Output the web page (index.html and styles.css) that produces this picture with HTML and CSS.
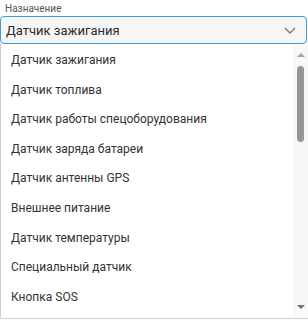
FILE: index.html
```html
<!DOCTYPE html>
<html lang="ru">
<head>
<meta charset="utf-8">
<link rel="stylesheet" href="styles.css">
</head>
<body>
<div class="field">
  <div class="label">Назначение</div>
  <div class="select">
    <span class="value">Датчик зажигания</span>
    <svg class="chev" width="12" height="7" viewBox="0 0 12 7"><path d="M1 1 L6 6 L11 1" fill="none" stroke="#7a7a7a" stroke-width="1.4"/></svg>
  </div>
  <div class="dropdown">
    <ul class="options">
      <li>Датчик зажигания</li>
      <li>Датчик топлива</li>
      <li>Датчик работы спецоборудования</li>
      <li>Датчик заряда батареи</li>
      <li>Датчик антенны GPS</li>
      <li>Внешнее питание</li>
      <li>Датчик температуры</li>
      <li>Специальный датчик</li>
      <li>Кнопка SOS</li>
    </ul>
    <div class="scrollbar">
      <div class="arrow up"></div>
      <div class="thumb"></div>
      <div class="spacer"></div>
      <div class="arrow down"></div>
    </div>
  </div>
</div>
</body>
</html>
```
FILE: styles.css
```css
html, body { margin: 0; padding: 0; background: #fff; }
body { font-family: Roboto, "Noto Sans", sans-serif; color: #333; width: 308px; height: 320px; overflow: hidden; }
.field { display: flex; flex-direction: column; }
.label { font-size: 10px; color: #555; line-height: 12px; padding: 3px 0 1px 5px; height: 12px; }
.select {
  box-sizing: border-box; height: 28px; width: 307px;
  border: 1px solid #3c9be0; border-radius: 4px; background: #f6f6f6;
  display: flex; align-items: center; justify-content: space-between;
  padding: 0 10px 0 5px;
}
.value { font-size: 13px; color: #2b2b2b; }
.chev { display: block; }
.dropdown {
  box-sizing: border-box; height: 275px; width: 308px;
  border-left: 1px solid #cfcfcf; border-bottom: 1px solid #cfcfcf;
  display: flex; overflow: hidden;
}
.options { list-style: none; margin: 0; padding: 2px 0 0 0; flex: 1; }
.options li { font-size: 12px; color: #333; height: 29.6px; line-height: 29.6px; padding-left: 10px; white-space: nowrap; }
.scrollbar { width: 15px; background: #f8f8f8; display: flex; flex-direction: column; align-items: center; }
.arrow { width: 0; height: 0; border-left: 4px solid transparent; border-right: 4px solid transparent; }
.arrow.up { border-bottom: 4px solid #a3a3a3; margin-top: 9px; }
.arrow.down { border-top: 4px solid #6f6f6f; margin-bottom: 9px; }
.thumb { width: 7px; height: 76px; background: #959595; border-radius: 4px; margin-top: 9px; }
.spacer { flex: 1; }
```
